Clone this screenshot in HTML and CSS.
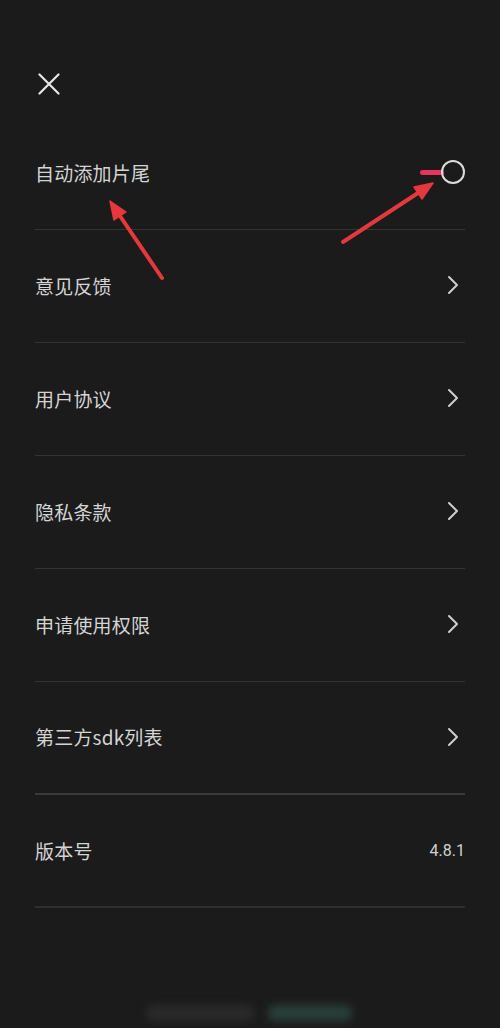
FILE: index.html
```html
<!DOCTYPE html>
<html lang="zh-CN">
<head>
<meta charset="utf-8">
<title>设置</title>
<link rel="stylesheet" href="styles.css">
</head>
<body>
<div class="page">
  <header class="header">
    <svg class="close" width="22" height="22" viewBox="0 0 22 22"><path d="M1.5 1.5 L20.5 20.5 M20.5 1.5 L1.5 20.5" stroke="#e6e6e6" stroke-width="2.2" stroke-linecap="round" fill="none"/></svg>
  </header>
  <ul class="list">
    <li class="row">
      <span class="label">自动添加片尾</span>
      <span class="toggle"><span class="track"></span><span class="knob"></span></span>
    </li>
    <li class="row">
      <span class="label">意见反馈</span>
      <svg class="chev" width="12" height="20" viewBox="0 0 12 20"><path d="M2 2 L10 10 L2 18" stroke="#cfcfcf" stroke-width="2" fill="none" stroke-linecap="round" stroke-linejoin="round"/></svg>
    </li>
    <li class="row">
      <span class="label">用户协议</span>
      <svg class="chev" width="12" height="20" viewBox="0 0 12 20"><path d="M2 2 L10 10 L2 18" stroke="#cfcfcf" stroke-width="2" fill="none" stroke-linecap="round" stroke-linejoin="round"/></svg>
    </li>
    <li class="row">
      <span class="label">隐私条款</span>
      <svg class="chev" width="12" height="20" viewBox="0 0 12 20"><path d="M2 2 L10 10 L2 18" stroke="#cfcfcf" stroke-width="2" fill="none" stroke-linecap="round" stroke-linejoin="round"/></svg>
    </li>
    <li class="row">
      <span class="label">申请使用权限</span>
      <svg class="chev" width="12" height="20" viewBox="0 0 12 20"><path d="M2 2 L10 10 L2 18" stroke="#cfcfcf" stroke-width="2" fill="none" stroke-linecap="round" stroke-linejoin="round"/></svg>
    </li>
    <li class="row row-thick">
      <span class="label">第三方sdk列表</span>
      <svg class="chev" width="12" height="20" viewBox="0 0 12 20"><path d="M2 2 L10 10 L2 18" stroke="#cfcfcf" stroke-width="2" fill="none" stroke-linecap="round" stroke-linejoin="round"/></svg>
    </li>
    <li class="row row-last">
      <span class="label">版本号</span>
      <span class="version">4.8.1</span>
    </li>
  </ul>
  <footer class="footer">
    <span class="blur blur-grey"></span>
    <span class="blur blur-teal"></span>
  </footer>
  <svg class="arrows" width="500" height="1028" viewBox="0 0 500 1028">
    <g stroke="#e5383d" stroke-width="4" stroke-linecap="round" fill="#e5383d">
      <line x1="162" y1="278" x2="120" y2="216"/>
      <polygon points="110,201 126,212 114,220" stroke-width="1.5" stroke-linejoin="round"/>
      <line x1="343" y1="242" x2="418" y2="193"/>
      <polygon points="433,183 422,199 414,187" stroke-width="1.5" stroke-linejoin="round"/>
    </g>
  </svg>
</div>
</body>
</html>
```

FILE: styles.css
```css
* { box-sizing: border-box; }
html, body {
  margin: 0;
  padding: 0;
  background: #1b1b1b;
}
body {
  font-family: "Noto Sans CJK SC", "Noto Sans", sans-serif;
  color: #d8d8d8;
}
.page {
  position: relative;
  width: 500px;
  height: 1028px;
  overflow: hidden;
}
.header {
  padding: 73px 0 0 38px;
  height: 117px;
}
.close { display: block; }
.list {
  list-style: none;
  margin: 0 35px;
  padding: 0;
}
.row {
  height: 113px;
  display: flex;
  align-items: center;
  justify-content: space-between;
  border-bottom: 1px solid #343434;
  padding-bottom: 2px;
}
.row-thick { border-bottom: 2px solid #3a3a3a; }
.row-last { border-bottom: 2px solid #2f2f2f; padding-bottom: 0; }
.label {
  font-size: 19px;
  letter-spacing: 0.2px;
  color: #d4d4d4;
}
.chev { margin-right: 6px; }
.version {
  font-family: "Roboto", "Noto Sans", sans-serif;
  font-size: 16px;
  color: #d0d0d0;
}
.toggle {
  display: flex;
  align-items: center;
}
.track {
  width: 24px;
  height: 5px;
  background: #e8335a;
  border-radius: 3px;
  margin-right: -3px;
}
.knob {
  width: 24px;
  height: 24px;
  border: 2px solid #dcdcdc;
  border-radius: 50%;
}
.footer {
  display: flex;
  gap: 14px;
  padding: 97px 0 0 146px;
}
.blur {
  display: block;
  height: 16px;
  border-radius: 6px;
  filter: blur(4px);
}
.blur-grey { width: 108px; background: #2a2a2a; }
.blur-teal { width: 84px; background: #283f3a; }
.arrows {
  position: absolute;
  left: 0;
  top: 0;
  pointer-events: none;
}
```
